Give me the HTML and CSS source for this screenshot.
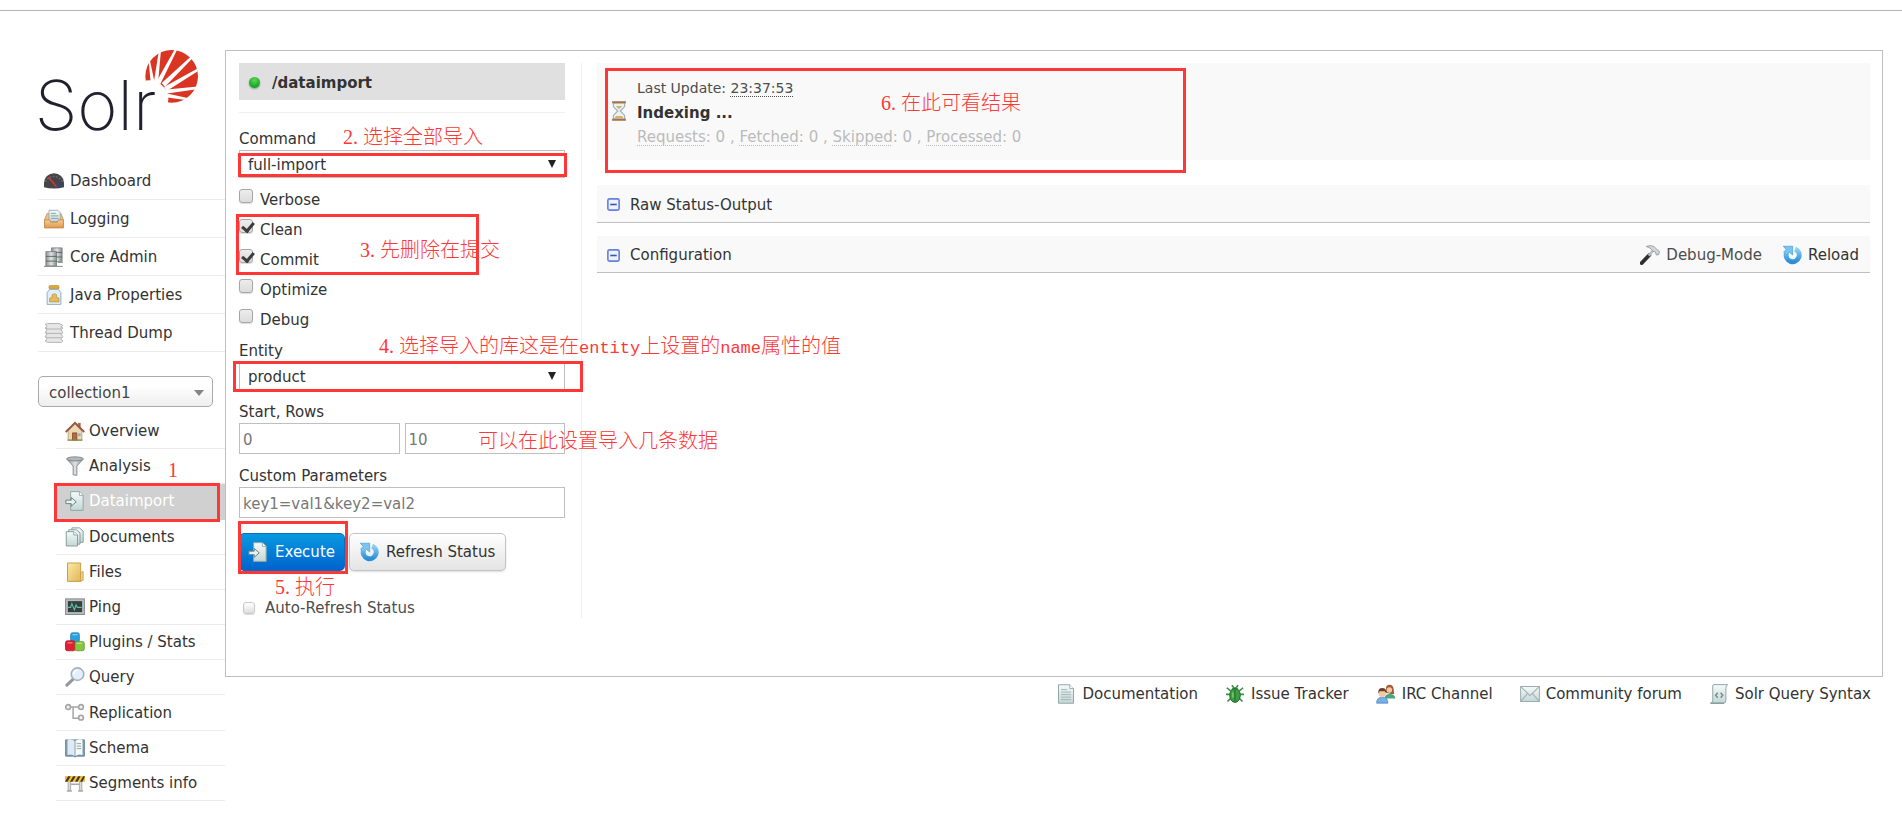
FILE: index.html
```html
<!DOCTYPE html>
<html lang="en">
<head>
<meta charset="utf-8">
<title>Solr Admin</title>
<link rel="stylesheet" href="styles.css">
</head>
<body>
<svg class="defs" width="0" height="0" aria-hidden="true">
  <defs>
    <linearGradient id="g-blue" x1="0" y1="0" x2="0" y2="1"><stop offset="0" stop-color="#8fd0f5"/><stop offset="1" stop-color="#2a8fd8"/></linearGradient>
    <linearGradient id="g-steel" x1="0" y1="0" x2="1" y2="0"><stop offset="0" stop-color="#8d9493"/><stop offset=".5" stop-color="#dfe3e3"/><stop offset="1" stop-color="#8a9090"/></linearGradient>
    <linearGradient id="g-paper" x1="0" y1="0" x2="0" y2="1"><stop offset="0" stop-color="#f6fafa"/><stop offset="1" stop-color="#c3d6d6"/></linearGradient>
    <linearGradient id="g-box" x1="0" y1="0" x2="0" y2="1"><stop offset="0" stop-color="#f6cf9c"/><stop offset="1" stop-color="#e0984c"/></linearGradient>
    <linearGradient id="g-folder" x1="0" y1="0" x2="1" y2="1"><stop offset="0" stop-color="#fbe9a8"/><stop offset="1" stop-color="#e3b656"/></linearGradient>
    <symbol id="i-import" viewBox="0 0 16 16">
      <path d="M4.500.5h7l3 3v12h-10z" fill="url(#g-paper)" stroke="#8fa6a6" stroke-width=".8"/>
      <path d="M11.500.5v3h3" fill="#fff" stroke="#8fa6a6" stroke-width=".7"/>
      <path d="M.7 7.300h4.300V5.200L9 8.700 5 12.200v-2.100H.7z" fill="#e8f0f0" stroke="#6b8585" stroke-width=".8"/>
    </symbol>
    <symbol id="i-refresh" viewBox="0 0 16 16">
      <path d="M10.500 3.300A5.200 5.200 0 1 1 3.600 6.500" fill="none" stroke="url(#g-blue)" stroke-width="4"/>
      <path d="M1 1h7.500v7L6.100 5.900 3.700 8.100 1.300 5.700 3.300 3.500z" fill="#7cc4f0" stroke="#4ba3dc" stroke-width=".6"/>
    </symbol>
    <symbol id="i-minus" viewBox="0 0 12 12">
      <rect x=".8" y=".8" width="10.400" height="10.400" rx="1.500" fill="#eef2ff" stroke="#6580dd" stroke-width="1.500"/>
      <path d="M3 6h6" stroke="#3c55b5" stroke-width="1.500"/>
    </symbol>
  </defs>
</svg>

<div class="page">
  <div class="layout">
    <aside class="sidebar">
      <a class="logo" href="#" aria-label="Solr">
        <svg width="163" height="96" viewBox="54 150 489 288" aria-hidden="true">
          <circle cx="455" cy="229" r="79" fill="#d93522"/>
          <circle cx="388" cy="298" r="57" fill="#fff"/>
          <g fill="#fff">
            <path d="M386 184l4-2 14 66h-12z"/>
            <path d="M417 150h6l-9 100h-13z"/>
            <path d="M466 145l6 3-51 104-12-6z"/>
            <path d="M511 171l5 5-81 84-10-11z"/>
            <path d="M534 205l4 6-98 62-8-12z"/>
            <path d="M540 259l1 7-105 15-2-12z"/>
            <path d="M506 295l-3 6-67-9 2-12z"/>
          </g>
          <text class="logo-word" x="44" y="389">Solr</text>
        </svg>
      </a>
      <nav aria-label="Main">
        <ul class="menu">
          <li><a href="#"><svg class="icon" viewBox="0 0 16 16"><path d="M0 13V9.500A8 7.700 0 0 1 16 9.500V13q-8 2-16 0z" fill="#454547"/><path d="M1.500 8.500A6.700 5.500 0 0 1 14.500 8.500" fill="none" stroke="#777a80" stroke-width="1" stroke-dasharray="1 1.500"/><path d="M9 10l6-1v3.500H9z" fill="#3b4469"/><path d="M3.500 5l6.500 7.500" stroke="#e03535" stroke-width="1.200"/></svg>Dashboard</a></li>
          <li><a href="#"><svg class="icon" viewBox="0 0 16 16"><path d="M2.500 3.500h11l2 5v6.500H.5V8.500z" fill="#eac08a" stroke="#c99258" stroke-width=".7"/><path d="M4 1h7l2 2v7H4z" fill="url(#g-paper)" stroke="#93aaaa" stroke-width=".7"/><path d="M5.500 3.500h4M5.500 5.500h6M5.500 7.500h6" stroke="#8ea5a5" stroke-width=".8"/><path d="M.5 8.700h4l1 2h5l1-2h4V15H.5z" fill="url(#g-box)" stroke="#c98b49" stroke-width=".7"/></svg>Logging</a></li>
          <li><a href="#"><svg class="icon" viewBox="0 0 16 16"><path d="M6 .7h8.500v11H6z" fill="url(#g-steel)" stroke="#70777a" stroke-width=".6"/><path d="M6 4.300h8.500M6 8h8.500" stroke="#555d5d" stroke-width=".7"/><path d="M1.500 3.700H10v11.500H1.500z" fill="url(#g-steel)" stroke="#70777a" stroke-width=".6"/><path d="M1.500 7.500H10M1.500 11.300H10" stroke="#555d5d" stroke-width=".7"/><path d="M0 15.500h15M11 12.300h4" stroke="#888" stroke-width=".8"/><path d="M8 13.300h1M12.500 10h1" stroke="#66b55b"/></svg>Core Admin</a></li>
          <li><a href="#"><svg class="icon" viewBox="0 0 16 16"><rect x="4" y=".3" width="8" height="3" rx="1" fill="#d9a83f" stroke="#b78527" stroke-width=".5"/><path d="M4.500 3.500h7l2 2.500v9.500h-11V6z" fill="#e2eff8" stroke="#8eb0c8" stroke-width=".8"/><path d="M4.500 13.500v-3l2-.8v-2l2-.8 1.500.8v2l2 .8v3z" fill="#e3ba62" stroke="#c39338" stroke-width=".6"/></svg>Java Properties</a></li>
          <li><a href="#"><svg class="icon" viewBox="0 0 16 16"><g fill="#e6e6e6" stroke="#b4b4b4" stroke-width=".8"><path d="M1 11.300l1.500 1-1.500 2.200 2 1h11l1-1-1.500-2.200 1.500-1z"/><path d="M1 7.800l1.500 1L1 10.800l2 1h11l1-1-1.500-2 1.500-1z"/><path d="M1 4.300l1.500 1L1 7.300l2 1h11l1-1-1.500-2 1.500-1z"/><path d="M1 1l2-.6h9L15 1.800l-1.500 1.500L15 4l-1 .8H3L1 3.700l1.500-1z"/></g></svg>Thread Dump</a></li>
        </ul>
      </nav>
      <button class="core-picker" type="button"><span>collection1</span><svg width="10" height="6" viewBox="0 0 10 6" aria-hidden="true"><path d="M0 0h10L5 6z" fill="#858585"/></svg></button>
      <nav aria-label="Core">
        <ul class="submenu">
          <li><a href="#"><svg class="icon" viewBox="0 0 16 16"><path d="M10.500 1.500h2V5h-2z" fill="#b55b3c"/><path d="M2.500 8L8 2.500 13.500 8v7.300h-11z" fill="#ead9b4" stroke="#b39669" stroke-width=".6"/><path d="M.6 8.800L8 1.500l7.400 7.300" fill="none" stroke="#8d5b42" stroke-width="1.500"/><path d="M6 9.500h3.500v5.800H6z" fill="#b7683c" stroke="#7f4522" stroke-width=".6"/><path d="M10.500 10h2v2h-2z" fill="#8db1c8"/><path d="M2 15.300h12" stroke="#7e9551" stroke-width="1"/></svg>Overview</a></li>
          <li><a href="#"><svg class="icon" viewBox="0 0 16 16"><path d="M1.500 2.500l5 5.500v7l3 .5V8l5-5.500z" fill="url(#g-steel)" stroke="#83868a" stroke-width=".7"/><ellipse cx="8" cy="2.300" rx="6.700" ry="1.600" fill="#b4b7bb" stroke="#84878b" stroke-width=".8"/></svg>Analysis</a></li>
          <li class="active"><a href="#"><svg class="icon"><use href="#i-import"/></svg>Dataimport</a></li>
          <li><a href="#"><svg class="icon" viewBox="0 0 16 16"><g fill="url(#g-paper)" stroke="#85a09e" stroke-width=".8"><path d="M5.500.7h6l3 2.500v9h-9z"/><path d="M3 2.200h6l3 2.500v9H3z"/><path d="M1 3.700h6l3 2.500v9H1z"/></g><path d="M7 3.700v2.700h3" fill="#fff" stroke="#85a09e" stroke-width=".7"/></svg>Documents</a></li>
          <li><a href="#"><svg class="icon" viewBox="0 0 16 16"><path d="M2 .8h10.500v14.700H2z" fill="url(#g-folder)" stroke="#c79f46" stroke-width=".8"/><path d="M12.500 8.500L14.500 7.500v7l-2 1z" fill="#f3d382" stroke="#c79f46" stroke-width=".7"/></svg>Files</a></li>
          <li><a href="#"><svg class="icon" viewBox="0 0 16 16"><rect x=".5" y="1.500" width="15" height="12.500" fill="#b9bdbd" stroke="#868a8a" stroke-width=".8"/><path d="M2.300 3.300h11.400v8.800H2.300z" fill="#36403f"/><path d="M2.500 8.300h2l1-3 2 5 1.300-4 1 2h3.500" fill="none" stroke="#5fc2a0" stroke-width=".9"/></svg>Ping</a></li>
          <li><a href="#"><svg class="icon" viewBox="0 0 16 16"><rect x="4.500" y=".6" width="7" height="7.400" rx="1.500" fill="#2ba0dc" stroke="#1b83bd" stroke-width=".6"/><rect x=".4" y="7" width="7.600" height="8" rx="1.500" fill="#e01f34" stroke="#b70f22" stroke-width=".6"/><rect x="8" y="7.500" width="7.400" height="7.500" rx="1.500" fill="#85c540" stroke="#5f9a23" stroke-width=".6"/><path d="M9.500 9h4M6 2h4M2 8.700h4" stroke="#fff" stroke-opacity=".45"/></svg>Plugins / Stats</a></li>
          <li><a href="#"><svg class="icon" viewBox="0 0 16 16"><path d="M6.500 9.700L1.500 14.500" stroke="#92979c" stroke-width="2.400" stroke-linecap="round"/><circle cx="10" cy="5.700" r="5" fill="#e3effa" stroke="#a9b1bd" stroke-width="1.300"/><path d="M7 5.500A3 3 0 0 1 10 2.500" fill="none" stroke="#fff" stroke-width="1.200"/></svg>Query</a></li>
          <li><a href="#"><svg class="icon" viewBox="0 0 16 16"><path d="M4 3.200h7M6.500 3.200v9h5" fill="none" stroke="#a5a5a5" stroke-width="1.200"/><g fill="#f3f3f3" stroke="#a5a5a5" stroke-width="1.300"><circle cx="2.500" cy="3.200" r="1.900"/><circle cx="12.800" cy="3.200" r="1.900"/><circle cx="12.800" cy="11.700" r="1.900"/></g></svg>Replication</a></li>
          <li><a href="#"><svg class="icon" viewBox="0 0 16 16"><path d="M.5 1.500h15V14.500H9L8 15.300 7 14.500H.5z" fill="#7d9fb8" stroke="#597d98" stroke-width=".7"/><path d="M2 1.300Q5.500.5 8 2.500v12Q5.500 12.500 2 13.500z" fill="#dfeaf2"/><path d="M14 1.300Q10.500.5 8 2.500v12q2.500-2 6-1z" fill="#f5faf7"/><path d="M8 2.500v12" stroke="#7a98a8" stroke-width=".7"/><path d="M9.300 4.500h3.500M9.300 6.500h3.500M9.300 8.500h3.500" stroke="#94aaa0" stroke-width=".8"/></svg>Schema</a></li>
          <li><a href="#"><svg class="icon" viewBox="0 0 16 16"><path d="M2.500 4h2v10h-2zM11.500 4h2v10h-2z" fill="#dadada" stroke="#9a9a9a" stroke-width=".6"/><path d="M1.500 14.300h4M10.500 14.300h4M4.500 9h7" stroke="#a9a9a9" stroke-width="1.200"/><path d="M0 2.500h16v4.500H0z" fill="#f4bd35"/><path d="M2.500 2.500h2L2 7H0zM6.500 2.500h2L6 7H4zM10.500 2.500h2L10 7H8zM14.500 2.500H16L14 7h-2z" fill="#3e3a30"/></svg>Segments info</a></li>
        </ul>
      </nav>
    </aside>

    <div class="main">
      <main class="panel">
        <form class="import-form">
          <h1 class="handler"><span class="dot"></span>/dataimport</h1>
          <div class="fields">
            <label class="field-label" for="command">Command</label>
            <div class="select"><select id="command"><option>full-import</option><option>delta-import</option></select></div>
            <div class="checks">
              <label class="check"><input type="checkbox"><span>Verbose</span></label>
              <label class="check"><input type="checkbox" checked><span>Clean</span></label>
              <label class="check"><input type="checkbox" checked><span>Commit</span></label>
              <label class="check"><input type="checkbox"><span>Optimize</span></label>
              <label class="check"><input type="checkbox"><span>Debug</span></label>
            </div>
            <label class="field-label" for="entity">Entity</label>
            <div class="select"><select id="entity"><option>product</option></select></div>
            <label class="field-label spaced" for="start">Start, Rows</label>
            <div class="pair">
              <input class="text" id="start" type="text" placeholder="0">
              <input class="text" type="text" placeholder="10" aria-label="Rows">
            </div>
            <label class="field-label spaced" for="custom">Custom Parameters</label>
            <input class="text" id="custom" type="text" placeholder="key1=val1&amp;key2=val2">
            <div class="actions">
              <button class="btn primary" type="button"><svg class="icon"><use href="#i-import"/></svg>Execute</button>
              <button class="btn" type="button"><svg class="icon"><use href="#i-refresh"/></svg>Refresh Status</button>
            </div>
            <label class="auto"><input type="checkbox"><span>Auto-Refresh Status</span></label>
          </div>
        </form>

        <div class="results">
          <section class="status">
            <svg class="icon" viewBox="0 0 16 16"><path d="M3.500 1.500h9v3L9 8l3.500 3.500v3h-9v-3L7 8 3.500 4.500z" fill="#e9f2f5" stroke="#9cafb7" stroke-width=".9"/><path d="M5.500 4h5L8 6.500zM4.500 13.500l1-1.500h5l1 1.500z" fill="#dbb159"/><path d="M2.500 1h11M2.500 15h11" stroke="#a8704a" stroke-width="1.500"/></svg>
            <div>
              <p class="updated">Last Update: <abbr>23:37:53</abbr></p>
              <p class="state">Indexing ...</p>
              <p class="counts"><abbr>Requests</abbr>: 0 , <abbr>Fetched</abbr>: 0 , <abbr>Skipped</abbr>: 0 , <abbr>Processed</abbr>: 0</p>
            </div>
          </section>
          <section class="bar"><a href="#"><svg class="toggle"><use href="#i-minus"/></svg>Raw Status-Output</a></section>
          <section class="bar">
            <a href="#"><svg class="toggle"><use href="#i-minus"/></svg>Configuration</a>
            <div class="tools">
              <a class="muted" href="#"><svg class="icon" viewBox="0 0 16 16"><path d="M1.300 14.500L7.500 8" stroke="#303030" stroke-width="3" stroke-linecap="round"/><path d="M7 8.500L10.500 4.500" stroke="#b9bcbc" stroke-width="2"/><path d="M5 1.200Q10-.8 13 3l2.500 2.200-.5 2.500-2 .3-.5-2.300-2-.7-1.300-1.500Q7.500 1.700 5 1.200z" fill="#d4d7d7" stroke="#929696" stroke-width=".7"/></svg>Debug-Mode</a>
              <a href="#"><svg class="icon"><use href="#i-refresh"/></svg>Reload</a>
            </div>
          </section>
        </div>
      </main>

      <footer class="links">
        <a href="#"><svg class="icon" viewBox="0 0 16 16"><path d="M2 .6h9l3 3v11.800H2z" fill="url(#g-paper)" stroke="#93a9a9" stroke-width=".8"/><path d="M11 .6v3h3" fill="#fff" stroke="#93a9a9" stroke-width=".7"/><path d="M4 4.500h5M4 6.500h8M4 8.500h8M4 10.500h8M4 12.500h8" stroke="#a1b6b4" stroke-width=".8"/></svg>Documentation</a>
        <a href="#"><svg class="icon" viewBox="0 0 16 16"><path d="M1.500 3l3 2.500M14.500 3l-3 2.500M.8 8.300h14.400M2 14l3-3M14 14l-3-3M5.500 1L7 3M10.500 1L9 3" stroke="#3d8f3f" stroke-width="1.300"/><ellipse cx="8" cy="9" rx="4.200" ry="5.700" fill="#3d9e43" stroke="#21692a" stroke-width=".8"/><path d="M5 4.500Q8 .8 11 4.500z" fill="#2a7a33"/><path d="M8 5v9" stroke="#21692a" stroke-width=".8"/><path d="M6.300 6.500v4.500" stroke="#82cf7e"/></svg>Issue Tracker</a>
        <a href="#"><svg class="icon" viewBox="0 0 16 16"><path d="M7 11.500q0-3.500 4-3.500t4.500 3.500z" fill="#4aa67c"/><path d="M8 7V3.500Q8 .5 10.800.5T14 3.500L14.500 8H12z" fill="#a45836"/><circle cx="10.700" cy="4.700" r="2.200" fill="#f1c9a2"/><path d="M.5 15.300Q.5 10.500 5 10.500t4.500 4.800z" fill="#77aee7" stroke="#4a83be" stroke-width=".6"/><circle cx="5" cy="7.300" r="3" fill="#f1c9a2"/><path d="M1.800 7.500Q1.500 3.200 5 3.200t3.300 4.300L7 5.700H3z" fill="#694129"/></svg>IRC Channel</a>
        <a href="#"><svg class="icon" viewBox="0 0 16 16"><rect x=".5" y="2" width="15" height="12" fill="url(#g-paper)" stroke="#9aacac" stroke-width=".8"/><path d="M.8 2.300L8 9.300l7.200-7M.8 13.700L6 7.700M15.200 13.700L10 7.700" fill="none" stroke="#a2b3b3" stroke-width=".9"/></svg>Community forum</a>
        <a href="#"><svg class="icon" viewBox="0 0 16 16"><path d="M3 1Q3 .5 4 .5h11q-1.500.5-1.500 2.500v10q0 2.500-2 2.500H1.500Q3 15 3 13z" fill="url(#g-paper)" stroke="#91a7a7" stroke-width=".8"/><path d="M1 15.300h11" stroke="#829a9a"/><path d="M7 7L5.300 9 7 11M9.300 7L11 9l-1.700 2" fill="none" stroke="#788c8c" stroke-width="1.200"/></svg>Solr Query Syntax</a>
      </footer>
    </div>
  </div>

  <div class="notes">
    <span class="frame f1"></span><span class="frame f2"></span><span class="frame f3"></span>
    <span class="frame f4"></span><span class="frame f5"></span><span class="frame f6"></span>
    <span class="note n1"><b>1</b></span>
    <span class="note n2"><b>2.</b>选择全部导入</span>
    <span class="note n3"><b>3.</b>先删除在提交</span>
    <span class="note n4"><b>4.</b>选择导入的库这是在<i>entity</i>上设置的<i>name</i>属性的值</span>
    <span class="note n4b">可以在此设置导入几条数据</span>
    <span class="note n5"><b>5.</b>执行</span>
    <span class="note n6"><b>6.</b>在此可看结果</span>
  </div>
</div>
</body>
</html>
```

FILE: styles.css
```css
* { box-sizing: border-box; }

body {
  margin: 0;
  background: #fff;
  color: #333;
  font: 15px/20px Verdana, "DejaVu Sans", sans-serif;
}

a { color: inherit; text-decoration: none; }
ul, p, h1 { margin: 0; padding: 0; list-style: none; }
button, input, select { font: inherit; color: inherit; margin: 0; }

.defs { position: absolute; }
.icon { width: 20px; height: 20px; flex: none; }

.page {
  position: relative;
  padding-top: 10px;
}
.layout {
  display: flex;
  align-items: flex-start;
  border-top: 1px solid #b4b4b4;
  padding: 39px 19px 0 38px;
}

/* Sidebar */
.sidebar { width: 187px; flex: none; }
.logo { display: block; height: 112px; }
.logo svg { display: block; overflow: visible; }
.logo-word {
  font-family: Inter, sans-serif;
  font-weight: 200;
  font-size: 206px;
  fill: #231f2e;
}

.menu a, .submenu a {
  display: flex;
  align-items: center;
  border-bottom: 1px solid #ebebeb;
}
.menu a { height: 38px; padding-left: 6px; gap: 6px; }
.submenu {
  display: grid;
  grid-auto-rows: 1fr;
  height: 387px;
  margin: 7px 0 0 18px;
}
.submenu a { height: 100%; padding-left: 9px; gap: 4px; }
.submenu .active a { background: #d0d0d0; border-color: #d0d0d0; color: #fff; }

.core-picker {
  display: flex;
  align-items: center;
  justify-content: space-between;
  width: 175px;
  height: 31px;
  margin-top: 24px;
  padding: 2px 8px 0 10px;
  border: 1px solid #aaa;
  border-radius: 5px;
  background: linear-gradient(#fff 30%, #eee);
  color: #444;
}

/* Content */
.main { flex: 1; min-width: 0; }
.panel {
  display: flex;
  align-items: flex-start;
  border: 1px solid #bfbfbf;
  padding: 12px 12px 58px 13px;
}

.import-form {
  width: 343px;
  flex: none;
  padding-right: 16px;
  border-right: 1px solid #f0f0f0;
}
.handler {
  display: flex;
  align-items: center;
  gap: 12px;
  height: 37px;
  padding: 2px 0 0 10px;
  background: #e0e0e0;
  font-size: 15px;
}
.dot {
  width: 11px;
  height: 11px;
  border-radius: 50%;
  background: radial-gradient(circle at 50% 30%, #5fd45f, #12a81e 70%);
  box-shadow: 0 1px 2px #999;
}
.fields {
  display: flex;
  flex-direction: column;
  margin-top: 12px;
  border-top: 1px solid #f0f0f0;
  padding-top: 13px;
}
.field-label { padding-top: 2px; line-height: 22px; }
.spaced { margin-top: 9px; }

.select { position: relative; }
.select::after {
  content: "";
  position: absolute;
  right: 9px;
  top: 10px;
  border: solid transparent;
  border-width: 8px 4px 0;
  border-top-color: #222;
  pointer-events: none;
}
.select select {
  display: block;
  width: 100%;
  height: 28px;
  padding: 2px 8px 0;
  border: 1px solid #bfbfbf;
  border-radius: 0;
  background: #fff;
  appearance: none;
}

.checks { margin: 7px 0 3px; }
.check { display: flex; height: 30px; }
.check span { padding: 5px 0 0 7px; }
input[type="checkbox"] {
  position: relative;
  flex: none;
  width: 14px;
  height: 14px;
  margin-top: 4px;
  border: 1px solid #a6a6a6;
  border-radius: 3px;
  background: linear-gradient(#ededed, #dcdcdc);
  box-shadow: 0 1px 1px #ddd;
  appearance: none;
}
input[type="checkbox"]:checked::after {
  content: "";
  position: absolute;
  left: 4px;
  top: 0;
  width: 5px;
  height: 9px;
  border: solid #3c3c3c;
  border-width: 0 3px 3px 0;
  transform: rotate(40deg);
}

.pair { display: flex; gap: 5px; }
.text {
  flex: 1;
  width: 100%;
  min-width: 0;
  min-height: 31px;
  padding: 4px 3px 2px;
  border: 1px solid #bfbfbf;
  background: #fff;
}
.text::placeholder { color: #777; opacity: 1; }

.actions { display: flex; gap: 4px; margin-top: 15px; }
.btn {
  display: flex;
  align-items: center;
  gap: 7px;
  height: 38px;
  padding: 0 10px 0 9px;
  border: 1px solid #c4c4c4;
  border-radius: 5px;
  background: linear-gradient(#fff, #e4e4e4);
  box-shadow: 0 1px 2px #ddd;
}
.btn.primary {
  padding: 0 9px 0 8px;
  border-color: #0c6cc0;
  background: linear-gradient(#0899e0, #0063cd);
  color: #fff;
}
.auto {
  display: flex;
  margin-top: 27px;
  padding-left: 4px;
  gap: 10px;
  color: #4d4d4d;
}
.auto input[type="checkbox"] {
  width: 12px;
  height: 12px;
  border-color: #c8c8c8;
  background: linear-gradient(#fff, #ddd);
}

.results { flex: 1; min-width: 0; margin-left: 15px; }
.status {
  display: flex;
  align-items: flex-start;
  gap: 8px;
  height: 97px;
  padding: 13px 12px;
  background: #f9f9f9;
}
.status .icon { margin-top: 25px; }
.status p { line-height: 24px; }
.status abbr {
  text-decoration: underline dotted 1px;
  text-underline-offset: 3px;
  text-decoration-skip-ink: none;
}
.status .updated { margin-bottom: 1px; color: #4d4d4d; font-size: 14px; }
.state { font-weight: bold; }
.counts { color: #bbb; }

.bar {
  display: flex;
  align-items: center;
  justify-content: space-between;
  height: 37px;
  margin-top: 13px;
  padding: 2px 11px 0 10px;
  border-bottom: 1px solid #bfbfbf;
  background: #f9f9f9;
}
.status + .bar { margin-top: 25px; height: 38px; }
.bar a { display: flex; align-items: center; gap: 10px; }
.toggle { width: 13px; height: 13px; }
.tools { display: flex; gap: 20px; }
.tools a { gap: 6px; }
.muted { color: #4d4d4d; }

.links {
  display: flex;
  justify-content: flex-end;
  gap: 27px;
  padding: 7px 12px 7px 0;
}
.links a { display: flex; align-items: center; gap: 6px; }

/* Tutorial call-outs laid over the page */
.frame, .note { position: absolute; }
.frame { border: 3px solid #ff3737; pointer-events: none; }
.f1 { left: 54px; top: 483px; width: 166px; height: 39px; }
.f2 { left: 238px; top: 153px; width: 329px; height: 24px; }
.f3 { left: 236px; top: 214px; width: 243px; height: 61px; }
.f4 { left: 233px; top: 361px; width: 350px; height: 31px; }
.f5 { left: 238px; top: 521px; width: 110px; height: 53px; }
.f6 { left: 605px; top: 68px; width: 581px; height: 105px; }
.note {
  color: #ff3737;
  font: 300 20px/24px "Noto Sans CJK SC", sans-serif;
  white-space: nowrap;
}
.note b { margin-right: 5px; font: 20px/24px "Liberation Serif", serif; }
.note i { font: 17px/24px "Liberation Mono", monospace; }
.n1 { left: 168px; top: 457px; }
.n2 { left: 343px; top: 124px; }
.n3 { left: 360px; top: 237px; }
.n4 { left: 379px; top: 333px; }
.n4b { left: 478px; top: 428px; }
.n5 { left: 275px; top: 574px; }
.n6 { left: 881px; top: 90px; }
```
